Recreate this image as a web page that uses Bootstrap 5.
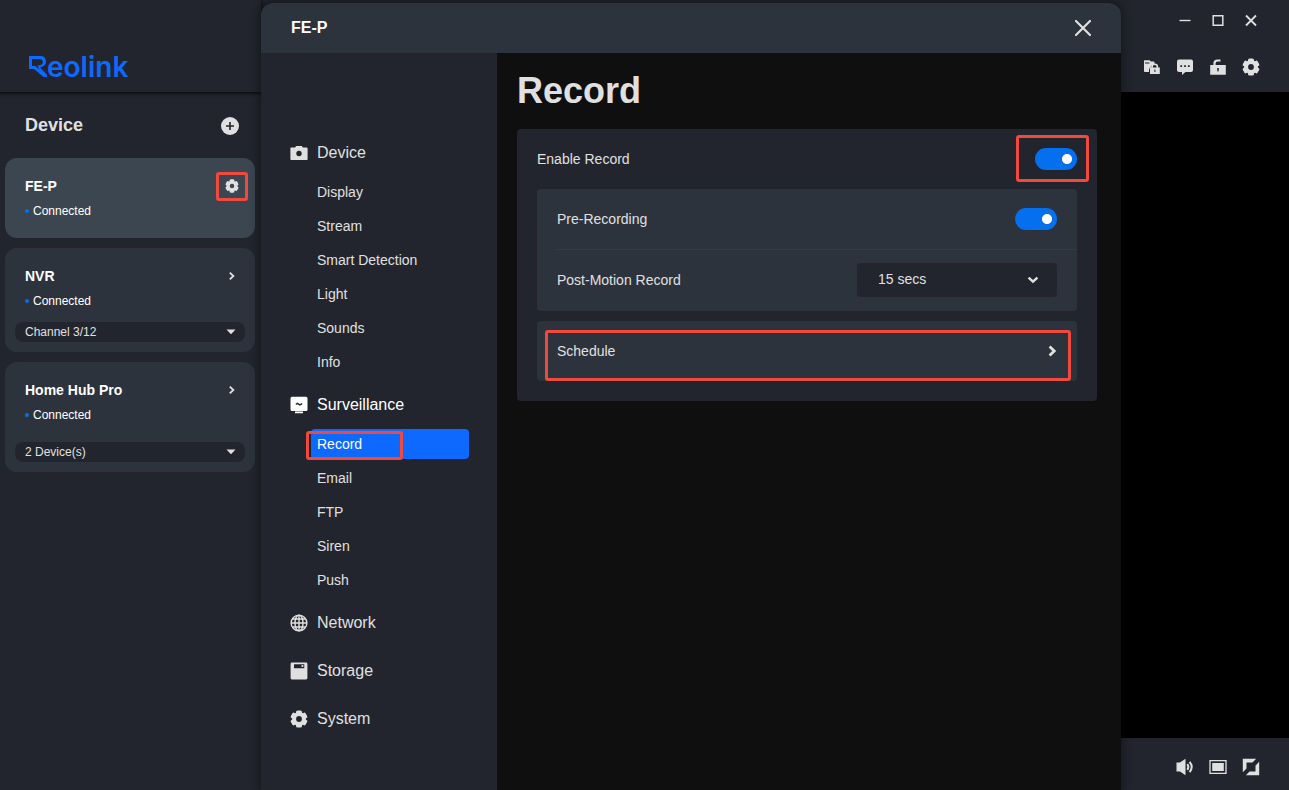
<!DOCTYPE html>
<html lang="en" data-bs-theme="dark">
<head>
<meta charset="utf-8">
<meta name="viewport" content="width=device-width, initial-scale=1">
<title>Reolink – FE-P Record</title>
<link href="https://cdn.jsdelivr.net/npm/bootstrap@5.3.0/dist/css/bootstrap.min.css" rel="stylesheet">
<style>
  :root { --base: #22252d; --raised: #2d333d; --active: #3c4650; --ink: #e0e0e0; --accent: #0d69ff; --toggle: #0570ee; --callout: #f1493e; }
  body { background: var(--base); color: var(--ink); font-family: "Liberation Sans", Arial, sans-serif; font-size: 14px; line-height: 20px; }
  a { color: inherit; text-decoration: none; }
  svg { display: block; flex: none; }
  .plain-btn { background: none; border: 0; padding: 0; color: inherit; }

  /* Device list */
  .device-pane { width: 261px; }
  .brand-bar { height: 92px; padding: 42px 0 0 28px; box-shadow: 0 1px 3px 1px rgba(0,0,0,.6); }
  .wordmark { color: var(--accent); font: 600 28px/50px Inter, sans-serif; }
  .device-head { height: 66px; padding: 2px 22px 0 25px; }
  .device-head h2 { font-size: 18px; font-weight: 700; color: var(--ink); }
  .device-list { gap: 10px; padding: 0 6px 0 5px; }
  .device-card { background: var(--raised); border-radius: 12px; padding: 18px 10px 10px; color: #fff; }
  .device-card.current { background: var(--active); padding-bottom: 12px; }
  .device-card h3 { font-size: 14px; line-height: 20px; font-weight: 700; }
  .device-row { padding: 0 4px 0 10px; }
  .device-row .plain-btn { width: 18px; height: 18px; display: grid; place-items: center; color: var(--ink); }
  .state { font-size: 12px; line-height: 30px; padding-left: 10px; gap: 4px; }
  .state::before { content: ""; width: 4px; height: 4px; border-radius: 50%; background: var(--toggle); }
  .select-wrap svg { position: absolute; right: 9px; top: 7px; pointer-events: none; color: var(--ink); }
  .pick-near { margin-top: 6px; }
  .pick-far { margin-top: 12px; }
  .channel-select { appearance: none; width: 100%; height: 20px; border: 0; border-radius: 8px; background: var(--base); color: var(--ink); font-size: 12px; line-height: 20px; padding: 0 10px; display: block; }

  /* Settings window */
  .settings { margin-top: 3px; border-radius: 12px 12px 0 0; box-shadow: 0 0 10px 2px rgba(0,0,0,.4); background: #0f0f0f; z-index: 2; }
  .settings-head { height: 50px; background: var(--raised); border-radius: 12px 12px 0 0; padding: 0 28px 0 30px; }
  .settings-head h1 { font-size: 16px; font-weight: 700; color: #fff; }
  .settings-nav { width: 236px; background: var(--base); padding: 76px 28px 20px 28px; }
  .nav-group { padding-bottom: 2px; }
  .nav-title { height: 46px; font-size: 16px; gap: 9px; padding: 2px 0 0 1px; }
  .nav-title.current { color: #fff; }
  .nav-sub { padding: 2px 0 2px 22px; }
  .nav-sub a { display: block; line-height: 30px; border-radius: 4px; padding-left: 6px; }
  .nav-sub a.current { background: var(--accent); color: #fff; }

  .content-pane { padding: 12px 24px 20px 20px; }
  .content-pane h2 { font-size: 36px; line-height: 52px; font-weight: 700; margin-bottom: 12px; color: var(--ink); }
  .panel { background: var(--base); border-radius: 4px; padding: 0 20px 20px; }
  .panel-group { background: var(--raised); border-radius: 4px; padding-left: 20px; }
  .setting-row { height: 60px; }
  .setting-row + .setting-row { height: 62px; padding-bottom: 2px; border-top: 1px solid #373d48; }
  .panel-group .setting-row { padding-right: 20px; }
  .schedule-link { height: 60px; margin-top: 10px; padding-right: 20px; }
  .toggle-input.form-check-input { width: 42px; height: 22px; margin: 0; float: none; border: 0; background-color: var(--toggle);
    background-image: radial-gradient(circle at 32px 11px, #fff 4.6px, transparent 5.4px); background-position: 0 0; }
  .length-wrap { width: 200px; }
  .length-select { appearance: none; width: 100%; height: 34px; border: 0; border-radius: 4px; background: var(--base); color: var(--ink); padding: 0 21px 2px; display: block; }
  .length-wrap svg { position: absolute; right: 18px; top: 12px; pointer-events: none; }

  /* Live view */
  .live-pane { width: 168px; }
  .live-head { height: 92px; padding: 4px 22px 0 0; }
  .tool-row { gap: 15px; padding-right: 7px; }
  .action-row { margin-top: 28px; }
  .live-foot { height: 52px; padding: 6px 22px 0 0; }
  .live-view { background: #000; }

  /* Highlight frames drawn over the controls */
  .callout { position: absolute; border: 3px solid var(--callout); border-radius: 3px; pointer-events: none; }
  .callout-gear { right: 7px; top: 14px; width: 32px; height: 29px; }
  .callout-record { left: 17px; top: 4px; width: 97px; height: 29px; }
  .callout-toggle { right: -12px; top: 6px; width: 73px; height: 47px; }
  .callout-schedule { left: 8px; right: 6px; top: 9px; bottom: 0; }
</style>
</head>
<body>
<svg width="0" height="0" class="position-absolute" aria-hidden="true">
  <clipPath id="teeth"><path d="M0 0h18v4H0zM0 14h18v4H0z"/></clipPath>
  <symbol id="gear" viewBox="0 0 18 18">
    <circle cx="9" cy="9" r="4.900" fill="none" stroke="currentColor" stroke-width="4"/>
    <g fill="currentColor">
      <rect x="6" y=".4" width="6" height="17.200" rx="1.600" clip-path="url(#teeth)"/>
      <rect x="6" y=".4" width="6" height="17.200" rx="1.600" clip-path="url(#teeth)" transform="rotate(60 9 9)"/>
      <rect x="6" y=".4" width="6" height="17.200" rx="1.600" clip-path="url(#teeth)" transform="rotate(120 9 9)"/>
    </g>
  </symbol>
  <symbol id="caret" viewBox="0 0 10 6"><path d="M.5.5h9L5 5.200z" fill="currentColor"/></symbol>
  <symbol id="chevron" viewBox="0 0 8 10"><path d="M1.800 1.600 5.400 5 1.800 8.400" fill="none" stroke="currentColor" stroke-width="1.800"/></symbol>
</svg>

<div class="d-flex min-vh-100">
  <aside class="device-pane flex-shrink-0">
    <header class="brand-bar">
      <a href="#" class="wordmark d-flex" aria-label="Reolink">
        <svg width="19" height="50" viewBox="0 0 19 50"><path fill="currentColor" fill-rule="evenodd" d="M1 14h11.500a5.500 5.500 0 0 1 2.300 10.500L12 25.500l7 7.200V35h-3.500L6 27H1zM4 17v7h3.500l4 3.500-2-4.200h2.700a3.200 3.200 0 0 0 0-6.300z"/></svg>
        <span>eolink</span>
      </a>
    </header>
    <div class="device-head d-flex align-items-center justify-content-between">
      <h2 class="m-0">Device</h2>
      <button class="plain-btn" type="button" aria-label="Add device">
        <svg width="18" height="18" viewBox="0 0 18 18"><circle cx="9" cy="9" r="9" fill="#e0e0e0"/><path d="M9 5v8M5 9h8" stroke="#22252d" stroke-width="1.600"/></svg>
      </button>
    </div>
    <div class="device-list d-flex flex-column">
      <article class="device-card current position-relative">
        <div class="device-row d-flex align-items-center justify-content-between">
          <h3 class="m-0">FE-P</h3>
          <button class="plain-btn" type="button" aria-label="Device settings"><svg width="14" height="14"><use href="#gear"/></svg></button>
        </div>
        <div class="state d-flex align-items-center">Connected</div>
        <span class="callout callout-gear"></span>
      </article>
      <article class="device-card">
        <div class="device-row d-flex align-items-center justify-content-between">
          <h3 class="m-0">NVR</h3>
          <button class="plain-btn" type="button" aria-label="Open NVR"><svg width="8" height="10"><use href="#chevron"/></svg></button>
        </div>
        <div class="state d-flex align-items-center">Connected</div>
        <div class="select-wrap position-relative pick-near">
          <select class="channel-select" aria-label="NVR channels"><option>Channel 3/12</option></select>
          <svg width="10" height="6"><use href="#caret"/></svg>
        </div>
      </article>
      <article class="device-card">
        <div class="device-row d-flex align-items-center justify-content-between">
          <h3 class="m-0">Home Hub Pro</h3>
          <button class="plain-btn" type="button" aria-label="Open Home Hub Pro"><svg width="8" height="10"><use href="#chevron"/></svg></button>
        </div>
        <div class="state d-flex align-items-center">Connected</div>
        <div class="select-wrap position-relative pick-far">
          <select class="channel-select" aria-label="Home Hub Pro devices"><option>2 Device(s)</option></select>
          <svg width="10" height="6"><use href="#caret"/></svg>
        </div>
      </article>
    </div>
  </aside>

  <section class="settings position-relative flex-grow-1 d-flex flex-column">
    <header class="settings-head d-flex align-items-center justify-content-between">
      <h1 class="m-0">FE-P</h1>
      <button class="plain-btn" type="button" aria-label="Close settings">
        <svg width="20" height="20" viewBox="0 0 20 20"><path d="M3 3l14 14M17 3 3 17" stroke="currentColor" stroke-width="2.200" stroke-linecap="round"/></svg>
      </button>
    </header>
    <div class="d-flex flex-grow-1">
      <nav class="settings-nav flex-shrink-0" aria-label="Settings">
        <div class="nav-group">
          <a href="#" class="nav-title d-flex align-items-center">
            <svg width="18" height="18" viewBox="0 0 18 18"><path fill="currentColor" fill-rule="evenodd" d="M1.200 3.500H5l1.300-1.500h5.400L13 3.500h3.800q.8 0 .8.800v10.900q0 .8-.8.800H1.200q-.8 0-.8-.8V4.300q0-.8.8-.8zM9 6.800a2.700 2.700 0 1 0 0 5.400 2.700 2.700 0 0 0 0-5.400z"/></svg>
            Device</a>
          <ul class="list-unstyled m-0">
            <li class="nav-sub"><a href="#">Display</a></li>
            <li class="nav-sub"><a href="#">Stream</a></li>
            <li class="nav-sub"><a href="#">Smart Detection</a></li>
            <li class="nav-sub"><a href="#">Light</a></li>
            <li class="nav-sub"><a href="#">Sounds</a></li>
            <li class="nav-sub"><a href="#">Info</a></li>
          </ul>
        </div>
        <div class="nav-group">
          <a href="#" class="nav-title current d-flex align-items-center">
            <svg width="18" height="18" viewBox="0 0 18 18"><path fill="currentColor" d="M2 .8h14q1.500 0 1.500 1.500v11.200Q17.500 15 16 15H2Q.5 15 .5 13.500V2.300Q.5.800 2 .8zM5 15.500h8v1.800H5z"/><path d="m5.800 8.600 1.600-1.200 2.400 1.500 2.400-1.300" fill="none" stroke="#22252d" stroke-width="1.300"/></svg>
            Surveillance</a>
          <ul class="list-unstyled m-0">
            <li class="nav-sub position-relative"><a href="#" class="current" aria-current="page">Record</a><span class="callout callout-record"></span></li>
            <li class="nav-sub"><a href="#">Email</a></li>
            <li class="nav-sub"><a href="#">FTP</a></li>
            <li class="nav-sub"><a href="#">Siren</a></li>
            <li class="nav-sub"><a href="#">Push</a></li>
          </ul>
        </div>
        <div class="nav-group">
          <a href="#" class="nav-title d-flex align-items-center">
            <svg width="18" height="18" viewBox="0 0 18 18" fill="none" stroke="currentColor" stroke-width="1.400"><circle cx="9" cy="9" r="7.900"/><ellipse cx="9" cy="9" rx="4" ry="7.900"/><path d="M9 1v16M1 9h16M2.300 5h13.400M2.300 13h13.400"/></svg>
            Network</a>
        </div>
        <div class="nav-group">
          <a href="#" class="nav-title d-flex align-items-center">
            <svg width="18" height="18" viewBox="0 0 18 18"><path fill="currentColor" fill-rule="evenodd" d="M2 .6h14q1.400 0 1.400 1.400v14q0 1.400-1.400 1.400H2Q.6 17.400.6 16V2Q.6.600 2 .6zM4 2.200v4h10.300v-4zm7.600.7h1.700v2.200h-1.700z"/></svg>
            Storage</a>
        </div>
        <div class="nav-group">
          <a href="#" class="nav-title d-flex align-items-center"><svg width="18" height="18"><use href="#gear"/></svg>System</a>
        </div>
      </nav>

      <main class="content-pane flex-grow-1">
        <h2>Record</h2>
        <div class="panel">
          <div class="setting-row position-relative d-flex align-items-center justify-content-between">
            <label for="enable">Enable Record</label>
            <input class="form-check-input toggle-input rounded-pill" type="checkbox" role="switch" id="enable" checked>
            <span class="callout callout-toggle"></span>
          </div>
          <div class="panel-group">
            <div class="setting-row d-flex align-items-center justify-content-between">
              <label for="pre">Pre-Recording</label>
              <input class="form-check-input toggle-input rounded-pill" type="checkbox" role="switch" id="pre" checked>
            </div>
            <div class="setting-row d-flex align-items-center justify-content-between">
              <label for="post">Post-Motion Record</label>
              <div class="length-wrap position-relative">
                <select class="length-select" id="post"><option>15 secs</option></select>
                <svg width="12" height="10" viewBox="0 0 12 10"><path d="m1.600 2.600 4.400 4 4.400-4" fill="none" stroke="currentColor" stroke-width="2.500"/></svg>
              </div>
            </div>
          </div>
          <a href="#" class="panel-group schedule-link position-relative d-flex align-items-center justify-content-between">
            Schedule
            <svg width="10" height="12" viewBox="0 0 10 12"><path d="M2.600 1.600 7.200 6l-4.600 4.400" fill="none" stroke="currentColor" stroke-width="2.800"/></svg>
            <span class="callout callout-schedule"></span>
          </a>
        </div>
      </main>
    </div>
  </section>

  <aside class="live-pane flex-shrink-0 d-flex flex-column">
    <header class="live-head">
      <div class="tool-row d-flex justify-content-end pt-2">
        <button class="plain-btn" type="button" aria-label="Minimize"><svg width="18" height="18" viewBox="0 0 18 18"><path d="M3.500 8.500h11" stroke="currentColor" stroke-width="1.400"/></svg></button>
        <button class="plain-btn" type="button" aria-label="Maximize"><svg width="18" height="18" viewBox="0 0 18 18"><path d="M4.200 3.700h9.600v9.600H4.200z" fill="none" stroke="currentColor" stroke-width="1.500"/></svg></button>
        <button class="plain-btn" type="button" aria-label="Close"><svg width="18" height="18" viewBox="0 0 18 18"><path d="m4 3.500 10 10M14 3.500l-10 10" stroke="currentColor" stroke-width="1.800"/></svg></button>
      </div>
      <div class="tool-row action-row d-flex justify-content-end">
        <button class="plain-btn" type="button" aria-label="Saved files"><svg width="18" height="18" viewBox="0 0 18 18"><path d="M1.500 2.200h5L8 3.600h2.500q1 0 1 1V6Q8 7 7.600 9.500 6 10 6 12v2H1.800q-.8 0-.8-1V3q0-.8.5-.8z" fill="currentColor"/><path d="M2 5h4.500" stroke="#22252d"/><path d="M9 10V9a2.700 2.700 0 0 1 5.400 0v1" fill="none" stroke="currentColor" stroke-width="1.600"/><path fill="currentColor" fill-rule="evenodd" d="M7 9.500h9.800v6.500H7zm4.400 2v2.500h1v-2.500z"/></svg></button>
        <button class="plain-btn" type="button" aria-label="Messages"><svg width="18" height="18" viewBox="0 0 18 18"><path fill="currentColor" d="M3 1.500h12q2 0 2 2v8.500q0 2-2 2H9.500L6 17v-3H3q-2 0-2-2V3.500q0-2 2-2z"/><path fill="#22252d" d="M4.300 7.200h1.800V9H4.300zm3.800 0h1.800V9H8.100zm3.800 0h1.800V9h-1.800z"/></svg></button>
        <button class="plain-btn" type="button" aria-label="Unlock"><svg width="18" height="18" viewBox="0 0 18 18"><path d="M5.500 8V5.500Q5.500 2.600 8.500 2.500h3" fill="none" stroke="currentColor" stroke-width="2.200"/><path fill="currentColor" fill-rule="evenodd" d="M1.200 7h15.600v9.700H1.200zM8.200 10v1.600l.3 2h1l.3-2V10z"/></svg></button>
        <button class="plain-btn" type="button" aria-label="Settings"><svg width="18" height="18"><use href="#gear"/></svg></button>
      </div>
    </header>
    <div class="live-view flex-grow-1"></div>
    <footer class="live-foot d-flex align-items-center justify-content-end">
      <div class="tool-row d-flex">
        <button class="plain-btn" type="button" aria-label="Volume"><svg width="18" height="18" viewBox="0 0 18 18"><path fill="currentColor" d="M.5 4.500H4L9.500.7v16.600L4 13.500H.5z"/><path d="M11.300 6.200q2 2.800 0 5.600M13.600 3.800q4.200 5.200 0 10.400" fill="none" stroke="currentColor" stroke-width="2"/></svg></button>
        <button class="plain-btn" type="button" aria-label="Aspect ratio"><svg width="18" height="18" viewBox="0 0 18 18"><path d="M1 2.700h16v12.600H1z" fill="none" stroke="currentColor" stroke-width="1.300"/><path fill="currentColor" d="M3.200 5h11.600v8H3.200z"/></svg></button>
        <button class="plain-btn" type="button" aria-label="Full screen"><svg width="18" height="18" viewBox="0 0 18 18"><path fill="currentColor" d="M.8.800h13.400L10.500 4.500H4.500v6L.8 14.200zM17.200 17.200V3.800L13.500 7.500v6h-6L3.800 17.200z"/></svg></button>
      </div>
    </footer>
  </aside>
</div>
<script src="https://cdn.jsdelivr.net/npm/bootstrap@5.3.0/dist/js/bootstrap.bundle.min.js"></script>
</body>
</html>
